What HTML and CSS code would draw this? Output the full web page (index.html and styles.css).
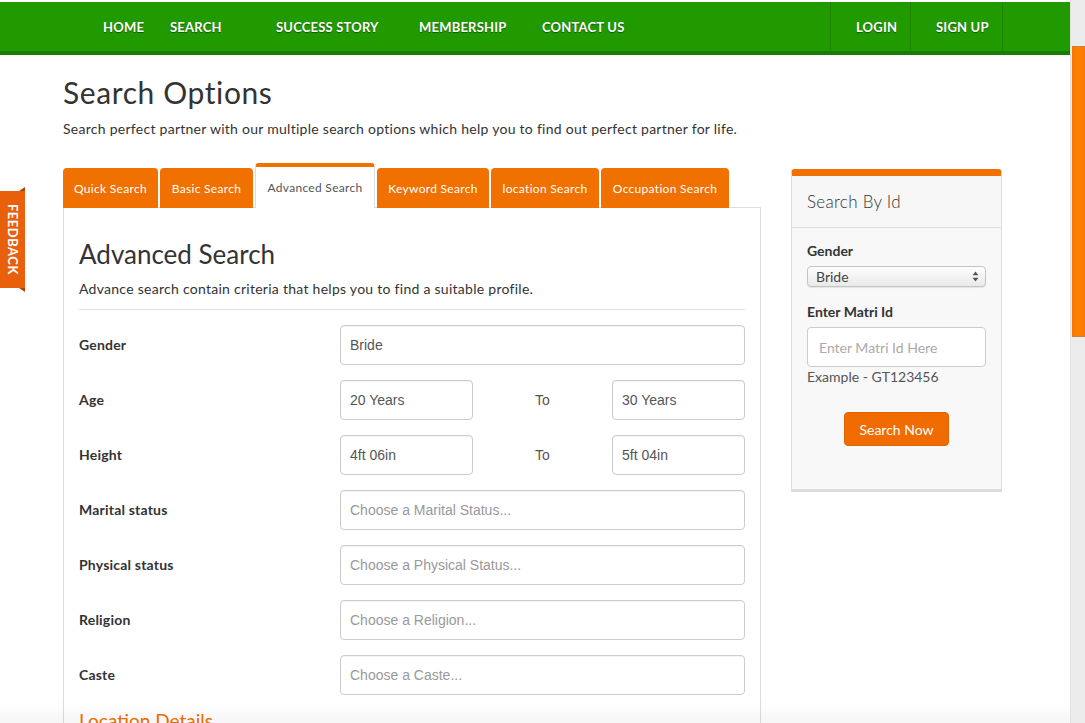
FILE: index.html
```html
<!DOCTYPE html>
<html lang="en">
<head>
<meta charset="utf-8">
<title>Search Options</title>
<link rel="stylesheet" href="styles.css">
</head>
<body>
<div class="feedback"><span>FEEDBACK</span></div>
<div class="scrollbar"><div class="thumb"></div></div>
<div class="bottom-fade"></div>

<header class="topbar">
  <nav class="nav">
    <ul class="menu">
      <li><a href="#">HOME</a></li>
      <li><a href="#">SEARCH</a></li>
      <li><a href="#">SUCCESS STORY</a></li>
      <li><a href="#">MEMBERSHIP</a></li>
      <li><a href="#">CONTACT US</a></li>
    </ul>
    <ul class="menu-right">
      <li><a href="#">LOGIN</a></li>
      <li><a href="#">SIGN UP</a></li>
    </ul>
  </nav>
</header>

<main class="page">
  <h1 class="title">Search Options</h1>
  <p class="lead">Search perfect partner with our multiple search options which help you to find out perfect partner for life.</p>

  <div class="columns">
    <section class="main-col">
      <ul class="tabs">
        <li class="tab">Quick Search</li>
        <li class="tab">Basic Search</li>
        <li class="tab active">Advanced Search</li>
        <li class="tab">Keyword Search</li>
        <li class="tab">location Search</li>
        <li class="tab">Occupation Search</li>
      </ul>
      <div class="tab-panel">
        <h2 class="panel-title">Advanced Search</h2>
        <p class="panel-desc">Advance search contain criteria that helps you to find a suitable profile.</p>
        <hr class="divider">

        <div class="form-row">
          <label class="form-label">Gender</label>
          <div class="field">Bride</div>
        </div>
        <div class="form-row">
          <label class="form-label">Age</label>
          <div class="range">
            <div class="field">20 Years</div>
            <span class="to">To</span>
            <div class="field">30 Years</div>
          </div>
        </div>
        <div class="form-row">
          <label class="form-label">Height</label>
          <div class="range">
            <div class="field">4ft 06in</div>
            <span class="to">To</span>
            <div class="field">5ft 04in</div>
          </div>
        </div>
        <div class="form-row">
          <label class="form-label">Marital status</label>
          <div class="field placeholder">Choose a Marital Status...</div>
        </div>
        <div class="form-row">
          <label class="form-label">Physical status</label>
          <div class="field placeholder">Choose a Physical Status...</div>
        </div>
        <div class="form-row">
          <label class="form-label">Religion</label>
          <div class="field placeholder">Choose a Religion...</div>
        </div>
        <div class="form-row">
          <label class="form-label">Caste</label>
          <div class="field placeholder">Choose a Caste...</div>
        </div>

        <h3 class="section-title">Location Details</h3>
      </div>
    </section>

    <aside class="side">
      <div class="side-head">Search By Id</div>
      <div class="side-body">
        <div class="side-label">Gender</div>
        <div class="select">
          <span>Bride</span>
          <svg width="7" height="11" viewBox="0 0 7 11"><path d="M3.5 0.5 L6.5 4.2 H0.5 Z M3.5 10.5 L6.5 6.8 H0.5 Z" fill="#555"/></svg>
        </div>
        <div class="side-label second">Enter Matri Id</div>
        <div class="id-input">Enter Matri Id Here</div>
        <div class="example">Example - GT123456</div>
        <button class="btn">Search Now</button>
      </div>
    </aside>
  </div>
</main>
</body>
</html>
```

FILE: styles.css
```css
* { box-sizing: border-box; }

html, body {
  margin: 0;
  padding: 0;
  height: 723px;
  overflow: hidden;
}

body {
  width: 1070px;
  background: #fff;
  color: #333;
  font-family: Lato, "Open Sans", sans-serif;
}

/* ---------- overlays ---------- */
.scrollbar {
  position: fixed;
  top: 0;
  right: 0;
  width: 15px;
  height: 723px;
  background: #ececec;
  border-left: 1px solid #e2e2e2;
}
.thumb {
  position: absolute;
  left: 1px;
  right: 0;
  top: 46px;
  height: 291px;
  background: linear-gradient(90deg, #f77800, #ff8200 50%, #f77800);
  border-top: 1px solid #c9803f;
  border-bottom: 1px solid #c9803f;
}

.bottom-fade {
  position: fixed;
  left: 0;
  bottom: 0;
  width: 1070px;
  height: 22px;
  background: linear-gradient(rgba(0,0,0,0), rgba(0,0,0,0.035));
  pointer-events: none;
}

.feedback {
  position: fixed;
  left: 0;
  top: 191px;
  width: 25px;
  height: 97px;
  background: #e8600c;
  display: flex;
  align-items: center;
  justify-content: center;
}
.feedback::before,
.feedback::after {
  content: "";
  position: absolute;
  right: 0;
  width: 0;
  height: 0;
  border-left: 6px solid transparent;
}
.feedback::before {
  top: -4px;
  border-bottom: 4px solid #a84408;
}
.feedback::after {
  bottom: -4px;
  border-top: 4px solid #a84408;
}
.feedback span {
  writing-mode: vertical-rl;
  color: #fff;
  font-weight: 700;
  font-size: 13px;
  letter-spacing: 0.5px;
}

/* ---------- top bar ---------- */
.topbar {
  margin-top: 2px;
  height: 53px;
  background: #219a00;
  border-bottom: 4px solid #1a7c00;
}
.nav {
  width: 1003px;
  height: 49px;
  padding-left: 63px;
  display: flex;
  justify-content: space-between;
}
.menu, .menu-right {
  list-style: none;
  margin: 0;
  padding: 0;
  display: flex;
}
.menu { padding-left: 40px; }
.menu li:nth-child(1) { width: 67px; }
.menu li:nth-child(2) { width: 106px; }
.menu li:nth-child(3) { width: 143px; }
.menu li:nth-child(4) { width: 123px; }
.menu a, .menu-right a {
  display: flex;
  align-items: center;
  height: 49px;
  color: #fff;
  text-decoration: none;
  font-weight: 700;
  font-size: 13px;
  letter-spacing: 0.2px;
  white-space: nowrap;
  text-shadow: 0 1px 1px rgba(0,0,0,0.45);
}
.menu-right li {
  border-left: 1px solid #1c8600;
  padding-left: 25px;
}
.menu-right li:nth-child(1) { width: 80px; }
.menu-right li:nth-child(2) { width: 93px; border-right: 1px solid #1c8600; }

/* ---------- page ---------- */
.page {
  padding-left: 63px;
  width: 1002px;
}
.title {
  margin: 21px 0 0;
  font-size: 30px;
  line-height: 33px;
  font-weight: 400;
  letter-spacing: 0.6px;
  color: #333;
}
.lead {
  margin: 10px 0 0;
  font-size: 14px;
  line-height: 20px;
  letter-spacing: 0.27px;
  color: #333;
}

.columns {
  display: flex;
  align-items: flex-start;
  gap: 30px;
  margin-top: 25px;
}
.main-col { width: 698px; }

/* tabs */
.tabs {
  list-style: none;
  margin: 0;
  padding: 0;
  display: flex;
  align-items: flex-end;
  gap: 2px;
  height: 44px;
  position: relative;
  z-index: 1;
  margin-bottom: -1px;
}
.tab {
  height: 40px;
  display: flex;
  align-items: center;
  justify-content: center;
  background: #f07000;
  color: #fff;
  font-size: 12px;
  letter-spacing: 0.3px;
  border-radius: 4px 4px 0 0;
  white-space: nowrap;
}
.tab:nth-child(1) { width: 95px; }
.tab:nth-child(2) { width: 93px; }
.tab:nth-child(3) { width: 120px; }
.tab:nth-child(4) { width: 112px; }
.tab:nth-child(5) { width: 108px; }
.tab:nth-child(6) { width: 128px; }
.tab.active {
  height: 45px;
  background: #fff;
  color: #555;
  border: 1px solid #ddd;
  border-top: 4px solid #f07000;
  border-bottom: none;
  padding-bottom: 1px;
}

.tab-panel {
  border: 1px solid #ddd;
  border-bottom: none;
  padding: 30px 15px 0;
  height: 520px;
}
.panel-title {
  margin: 0;
  font-size: 26px;
  line-height: 32px;
  font-weight: 400;
  color: #333;
}
.panel-desc {
  margin: 10px 0 0;
  font-size: 14px;
  line-height: 18px;
  letter-spacing: 0.27px;
  color: #333;
}
.divider {
  margin: 11px 0 15px;
  border: none;
  border-top: 1px solid #ddd;
  height: 0;
}

.form-row {
  display: grid;
  grid-template-columns: 261px 1fr;
  align-items: center;
  height: 40px;
  margin-bottom: 15px;
}
.form-label {
  font-size: 14px;
  font-weight: 700;
  letter-spacing: 0.2px;
  color: #333;
  margin-top: -2px;
}
.field {
  height: 40px;
  border: 1px solid #ccc;
  border-radius: 4px;
  padding: 0 9px;
  display: flex;
  align-items: center;
  font-family: "Liberation Sans", Arial, sans-serif;
  font-size: 14px;
  color: #555;
  background: #fff;
  box-shadow: inset 0 1px 1px rgba(0,0,0,0.05);
}
.field.placeholder { color: #999; }
.range {
  display: grid;
  grid-template-columns: 133px 1fr 133px;
  align-items: center;
}
.to {
  text-align: center;
  font-family: "Liberation Sans", Arial, sans-serif;
  font-size: 14px;
  color: #555;
}
.section-title {
  margin: 0;
  font-size: 19px;
  line-height: 22px;
  font-weight: 400;
  color: #f07000;
}

/* side panel */
.side {
  width: 211px;
  margin-top: 5px;
  background: #f8f8f8;
  border: 1px solid #ddd;
  border-top: 7px solid #f07000;
  border-bottom: 3px solid #ddd;
  border-radius: 4px 4px 0 0;
}
.side-head {
  height: 52px;
  padding: 0 15px;
  display: flex;
  align-items: center;
  font-size: 17px;
  font-weight: 300;
  letter-spacing: 0.3px;
  color: #333;
  background: #f7f7f7;
  border-bottom: 1px solid #ddd;
}
.side-body {
  padding: 13px 15px 43px;
}
.side-label {
  font-size: 14px;
  line-height: 20px;
  font-weight: 700;
  color: #333;
}
.side-label.second { margin-top: 15px; }
.select {
  margin-top: 5px;
  height: 21px;
  border: 1px solid #c4c4c4;
  border-radius: 4px;
  background: linear-gradient(#fefefe, #e9e9e9);
  box-shadow: 0 1px 1px rgba(0,0,0,0.08);
  display: flex;
  align-items: center;
  justify-content: space-between;
  padding: 0 6px 0 8px;
  font-size: 14px;
  color: #444;
}
.id-input {
  margin-top: 5px;
  height: 40px;
  border: 1px solid #ccc;
  border-radius: 4px;
  background: #fff;
  padding: 0 11px;
  display: flex;
  align-items: center;
  font-size: 14px;
  color: #aaa;
}
.example {
  font-size: 14px;
  line-height: 20px;
  color: #555;
}
.btn {
  display: block;
  margin: 25px auto 0;
  width: 105px;
  height: 34px;
  border: 1px solid #e06400;
  border-radius: 4px;
  background: #f06c00;
  color: #fff;
  font-family: Lato, "Open Sans", sans-serif;
  font-size: 14px;
  padding: 0;
}
```
